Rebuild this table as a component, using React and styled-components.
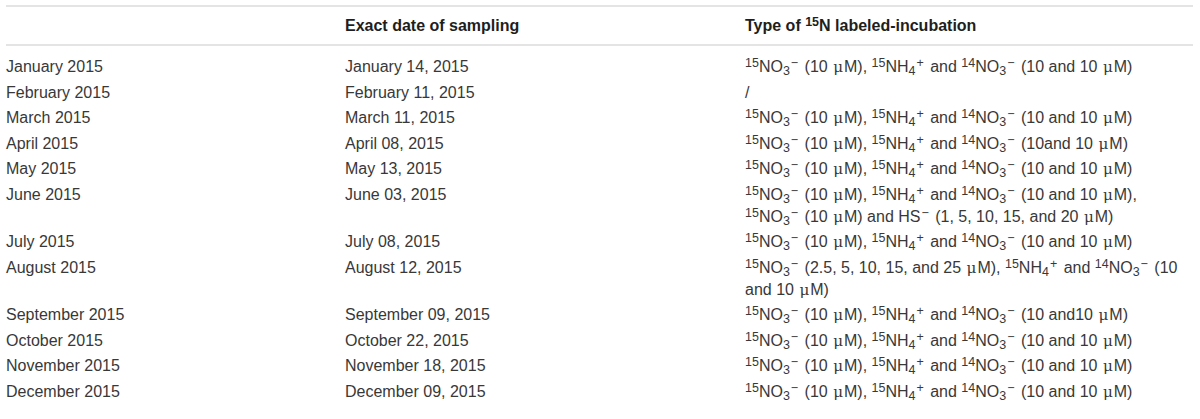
import styled, { createGlobalStyle } from "styled-components";

const GlobalStyle = createGlobalStyle`
  body {
    margin: 0;
    background: #ffffff;
    font-family: "Liberation Sans", Arial, sans-serif;
  }
`;

const rows = [
  { month: "January 2015", date: "January 14, 2015", kind: "std" },
  { month: "February 2015", date: "February 11, 2015", kind: "none" },
  { month: "March 2015", date: "March 11, 2015", kind: "std" },
  { month: "April 2015", date: "April 08, 2015", kind: "std", sep: "10and 10" },
  { month: "May 2015", date: "May 13, 2015", kind: "std" },
  { month: "June 2015", date: "June 03, 2015", kind: "june" },
  { month: "July 2015", date: "July 08, 2015", kind: "std" },
  { month: "August 2015", date: "August 12, 2015", kind: "august" },
  { month: "September 2015", date: "September 09, 2015", kind: "std", sep: "10 and10" },
  { month: "October 2015", date: "October 22, 2015", kind: "std" },
  { month: "November 2015", date: "November 18, 2015", kind: "std" },
  { month: "December 2015", date: "December 09, 2015", kind: "std" },
];

const Micro = () => (
  <>
    <Mu>μ</Mu>M
  </>
);

const Nitrate = ({ iso = "15" }) => (
  <>
    <Sup>{iso}</Sup>NO<Sub>3</Sub>
    <Charge>−</Charge>
  </>
);

const Ammonium = () => (
  <>
    <Sup>15</Sup>NH<Sub>4</Sub>
    <Charge>+</Charge>
  </>
);

const Incubation = ({ kind, sep = "10 and 10" }) => {
  if (kind === "none") return "/";
  if (kind === "june")
    return (
      <>
        <Nitrate /> (10 <Micro />), <Ammonium /> and <Nitrate iso="14" /> (10 and 10{" "}
        <Micro />
        ),
        <br />
        <Nitrate /> (10 <Micro />) and HS<Charge>−</Charge> (1, 5, 10, 15, and 20 <Micro />)
      </>
    );
  if (kind === "august")
    return (
      <>
        <Nitrate /> (2.5, 5, 10, 15, and 25 <Micro />), <Ammonium /> and{" "}
        <Nitrate iso="14" /> (10
        <br />
        and 10 <Micro />)
      </>
    );
  return (
    <>
      <Nitrate /> (10 <Micro />), <Ammonium /> and <Nitrate iso="14" /> ({sep} <Micro />)
    </>
  );
};

const App = () => {
  return (
    <>
      <GlobalStyle />
      <Wrap>
        <Table>
          <colgroup>
            <col style={{ width: 339 }} />
            <col style={{ width: 400 }} />
            <col />
          </colgroup>
          <thead>
            <tr>
              <Th></Th>
              <Th>Exact date of sampling</Th>
              <Th>
                Type of <Sup>15</Sup>N labeled-incubation
              </Th>
            </tr>
          </thead>
          <tbody>
            {rows.map((r, i) => (
              <Row key={r.month} $first={i === 0}>
                <Td>{r.month}</Td>
                <Td>{r.date}</Td>
                <Td>
                  <Incubation kind={r.kind} sep={r.sep} />
                </Td>
              </Row>
            ))}
          </tbody>
        </Table>
      </Wrap>
    </>
  );
};

const Wrap = styled.div`
  padding: 5px 7px 0 6px;
  width: 1187px;
`;

const Table = styled.table`
  width: 1187px;
  border-collapse: collapse;
  table-layout: fixed;
  border-top: 2px solid #e4e4e4;
  color: #383838;
  font-size: 16px;
`;

const Th = styled.th`
  text-align: left;
  font-weight: 700;
  color: #1e1e1e;
  padding: 8px 0 7px;
  line-height: 22px;
  border-bottom: 2px solid #e4e4e4;
  white-space: nowrap;
`;

const Row = styled.tr`
  & > td {
    padding-top: ${(p) => (p.$first ? "10px" : "2px")};
  }
`;

const Td = styled.td`
  padding: 2px 0 1.5px;
  line-height: 22px;
  vertical-align: top;
  white-space: nowrap;
`;

const Sup = styled.sup`
  font-size: 0.78em;
  line-height: 0;
  vertical-align: 0.4em;
`;

const Charge = styled(Sup)`
  margin: 0 2px 0 1px;
`;

const Sub = styled.sub`
  font-size: 0.78em;
  line-height: 0;
  vertical-align: -0.25em;
`;

const Mu = styled.span`
  font-family: "DejaVu Serif", "Liberation Serif", serif;
  font-size: 0.95em;
  margin: 0 1px;
`;

export default App;
